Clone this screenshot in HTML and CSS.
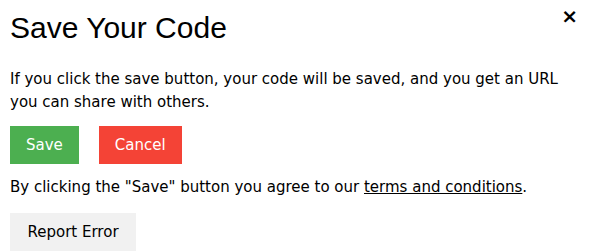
FILE: index.html
```html
<!DOCTYPE html>
<html>
<head>
<meta charset="utf-8">
<link rel="stylesheet" href="styles.css">
</head>
<body>
<div class="modal">
  <span class="close">&times;</span>
  <h2 class="title">Save Your Code</h2>
  <p class="intro">If you click the save button, your code will be saved, and you get an URL you can share with others.</p>
  <div class="actions">
    <button class="btn btn-save">Save</button>
    <button class="btn btn-cancel">Cancel</button>
  </div>
  <p class="terms">By clicking the "Save" button you agree to our <a href="#">terms and conditions</a>.</p>
  <button class="btn btn-report">Report Error</button>
</div>
</body>
</html>
```
FILE: styles.css
```css
html, body {
  margin: 0;
  background: #fff;
}
.modal {
  position: relative;
  width: 590px;
  height: 252px;
  box-sizing: border-box;
  padding: 10px 10px 0 10px;
  font-family: Verdana, "DejaVu Sans", sans-serif;
  font-size: 15px;
  line-height: 1.5;
  color: #000;
}
.close {
  position: absolute;
  top: 1px;
  right: 12px;
  font-family: "DejaVu Sans", sans-serif;
  font-weight: bold;
  font-size: 20px;
  line-height: 1.5;
}
.title {
  margin: 0;
  font-family: "Liberation Sans", Arial, sans-serif;
  font-weight: normal;
  font-size: 30px;
  line-height: 35px;
}
.intro {
  margin: 23px 0 0 0;
}
.actions {
  display: flex;
  gap: 20px;
  margin-top: 13px;
}
.btn {
  border: none;
  margin: 0;
  padding: 8px 16px;
  font-family: inherit;
  font-size: 15px;
  line-height: 22px;
  cursor: pointer;
}
.btn-save {
  background: #4caf50;
  color: #fff;
}
.btn-cancel {
  background: #f44336;
  color: #fff;
}
.terms {
  margin: 12px 0 14px 0;
}
.terms a {
  color: #000;
  text-decoration: underline;
}
.btn-report {
  background: #f1f1f1;
  color: #000;
  padding: 8px 17.5px;
}
```
